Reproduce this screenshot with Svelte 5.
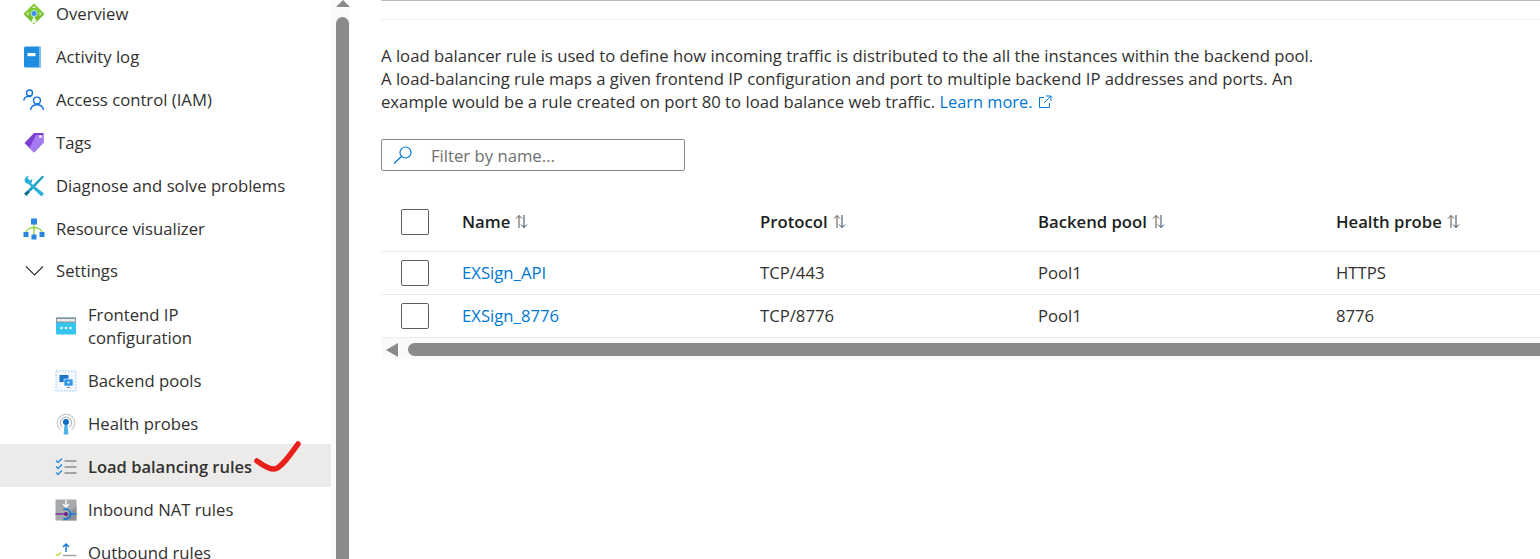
<script lang="ts">
const rows = [
  { name: 'EXSign_API', protocol: 'TCP/443', pool: 'Pool1', probe: 'HTTPS' },
  { name: 'EXSign_8776', protocol: 'TCP/8776', pool: 'Pool1', probe: '8776' },
]
const columns = ['Name', 'Protocol', 'Backend pool', 'Health probe']
</script>

{#snippet sortIcon()}
  <svg class="sort" width="13" height="15" viewBox="0 0 13 15" fill="none" stroke-width="1">
    <path d="M4 14V1.500M1 4.500l3-3 3 3" stroke="#5f5142" />
    <path d="M9 1v12.500M6 10.500l3 3 3-3" stroke="#33465a" />
  </svg>
{/snippet}

<div class="page">
  <nav class="sidebar">
    <ul class="menu">
      <li class="item">
        <span class="icon">
          <svg width="22" height="22" viewBox="0 0 22 22">
            <path d="M11 0.500 21.500 11 11 21.500 0.500 11z" fill="#76bc2d" />
            <path d="M11 .5 21.500 11H.5z" fill="#86d633" opacity=".6" />
            <path d="M11 3 9 5h4zM3.500 11l2-2v4zM18.500 11l-2-2v4z" fill="#e8f6d4" />
            <path d="M11 12v6" stroke="#fff" stroke-width="1.400" />
            <circle cx="11" cy="18" r="2.400" fill="#e8f6d4" />
            <circle cx="11" cy="10.500" r="3" fill="#3e8fe6" stroke="#dff0ff" stroke-width=".8" />
          </svg>
        </span>
        Overview
      </li>
      <li class="item">
        <span class="icon">
          <svg width="20" height="22" viewBox="0 0 20 22">
            <rect x="1" y="0.500" width="17" height="21" rx="1.500" fill="#1f8ee0" />
            <path d="M2.500 .5H17a1 1 0 0 1 1 1v19a1 1 0 0 1-1 1h-1V.5z" fill="#7fbdea" />
            <rect x="4.500" y="7" width="8" height="3.200" fill="#fff" />
          </svg>
        </span>
        Activity log
      </li>
      <li class="item">
        <span class="icon">
          <svg width="22" height="22" viewBox="0 0 22 22" fill="none" stroke="#0f6fe0" stroke-width="1.400">
            <circle cx="6.500" cy="4" r="3" />
            <path d="M.7 11.500C1.300 8.800 3.400 7.400 6 7.400c.8 0 1.600.1 2.300.4" />
            <circle cx="14" cy="11.500" r="3.400" />
            <path d="M7.500 21c.6-3.200 3.200-5.200 6.500-5.200s5.900 2 6.500 5.200" />
          </svg>
        </span>
        Access control (IAM)
      </li>
      <li class="item">
        <span class="icon">
          <svg width="22" height="22" viewBox="0 0 22 22">
            <path d="M11 1h9.500v9.500L11 20.500 1.500 11z" fill="#7b3fd0" />
            <path d="M13 3h7.500v8L11 20.500 6.500 16z" fill="#a67af0" />
            <circle cx="17.500" cy="4.500" r="1.500" fill="#efe6fb" />
          </svg>
        </span>
        Tags
      </li>
      <li class="item">
        <span class="icon">
          <svg width="22" height="22" viewBox="0 0 22 22">
            <path d="M19.500 0.500 21 2 7 17l-2-2z" fill="#1b9cc4" />
            <path d="M2 3.500a5 5 0 0 1 4-3L4.500 3l2.500 2.500L9.200 4a5 5 0 0 1-1 4.500L21 18.500 18.500 21.500 5.700 9.200A5 5 0 0 1 1.500 6z" fill="#29b1d8" />
            <path d="M5 15l2 2-3.500 4L1 18.500z" fill="#0c6d94" />
          </svg>
        </span>
        Diagnose and solve problems
      </li>
      <li class="item">
        <span class="icon">
          <svg width="22" height="22" viewBox="0 0 22 22">
            <path d="M11 5v13M3 15.500c0-3.500 3-6 8-6s8 2.500 8 6" fill="none" stroke="#8cd03a" stroke-width="1.400" />
            <rect x="8" y="0.500" width="6" height="6" fill="#2a86e2" />
            <rect x="0.500" y="14" width="5" height="5" fill="#2a86e2" />
            <rect x="16.500" y="14" width="5" height="5" fill="#2a86e2" />
            <rect x="8.500" y="16.500" width="5" height="5" fill="#2a86e2" />
          </svg>
        </span>
        Resource visualizer
      </li>
      <li class="item section">
        <span class="icon">
          <svg width="22" height="12" viewBox="0 0 22 12" fill="none" stroke="#323130" stroke-width="1.100">
            <path d="M3 1.500l8.500 8.500L20 1.500" />
          </svg>
        </span>
        Settings
      </li>
      <li class="item sub tall">
        <span class="icon">
          <svg width="22" height="18" viewBox="0 0 22 18">
            <rect x="1" y="0.500" width="20" height="17" rx="1" fill="#36c5ee" />
            <rect x="1" y="0.500" width="20" height="5" fill="#8b9399" />
            <rect x="2" y="2" width="18" height="2.500" fill="#e8eaec" />
            <circle cx="6.500" cy="11" r="1.300" fill="#e6f9ff" />
            <circle cx="11" cy="11" r="1.300" fill="#e6f9ff" />
            <circle cx="15.500" cy="11" r="1.300" fill="#e6f9ff" />
          </svg>
        </span>
        <span>Frontend IP<br />configuration</span>
      </li>
      <li class="item sub">
        <span class="icon">
          <svg width="22" height="22" viewBox="0 0 22 22">
            <rect x="1" y="1" width="20" height="20" fill="#f3f9fe" stroke="#8cc4f0" stroke-dasharray="1.500 1.500" />
            <rect x="4.500" y="5" width="9" height="7" fill="#1c74c8" />
            <rect x="9" y="9" width="9" height="7" fill="#2e95e8" stroke="#fff" stroke-width=".6" />
            <circle cx="13.500" cy="12.500" r="1.300" fill="#bfe3fb" />
            <path d="M12 17.500h3" stroke="#7a7a7a" />
          </svg>
        </span>
        Backend pools
      </li>
      <li class="item sub">
        <span class="icon">
          <svg width="22" height="22" viewBox="0 0 22 22" fill="none">
            <path d="M5.200 16.500a8.800 8.800 0 1 1 11.600 0" stroke="#c9c9c9" stroke-width="1.100" />
            <path d="M7.200 14a5.700 5.700 0 1 1 7.600 0" stroke="#aeb4b8" stroke-width="1.100" />
            <path d="M9.500 12h3l1 9.500h-5z" fill="#4fb3e8" />
            <circle cx="11" cy="9" r="3" fill="#0a6cc4" />
          </svg>
        </span>
        Health probes
      </li>
      <li class="item sub active">
        <span class="icon">
          <svg width="22" height="18" viewBox="0 0 22 18" fill="none">
            <path d="M1 2.500l2 2 4-4M1 8.500l2 2 4-4M1 14.500l2 2 4-4" stroke="#2e8ee8" stroke-width="1.500" />
            <path d="M9.500 3h12M9.500 9h12M9.500 15h12" stroke="#a3a3a3" stroke-width="2" />
          </svg>
        </span>
        Load balancing rules
      </li>
      <li class="item sub">
        <span class="icon">
          <svg width="22" height="22" viewBox="0 0 22 22" fill="none">
            <rect x="0.500" y="0.500" width="21" height="21" fill="#a7a9ac" />
            <path d="M7 21.500 21.500 7v14.500z" fill="#8f9194" />
            <path d="M11 1v6M8 5l3 3 3-3" stroke="#fff" stroke-width="1.300" />
            <path d="M.5 15h10" stroke="#8a2aa0" stroke-width="1.400" />
            <path d="M14 15h7.500" stroke="#0b78d8" stroke-width="1.400" />
            <path d="M8.500 10.500a5 5 0 1 1 0 9" stroke="#0b78d8" stroke-width="1.500" />
            <circle cx="11" cy="15" r="2" fill="#6d1f8c" />
          </svg>
        </span>
        Inbound NAT rules
      </li>
      <li class="item sub">
        <span class="icon">
          <svg width="22" height="22" viewBox="0 0 22 22" fill="none">
            <path d="M11 10V2M8 5l3-3 3 3" stroke="#0b78d8" stroke-width="1.400" />
            <path d="M8 13.500h13.500" stroke="#a3a3a3" stroke-width="1.500" />
            <path d="M1 12l1.500 1.500L6 10.500" stroke="#b5d334" stroke-width="1.200" />
          </svg>
        </span>
        Outbound rules
      </li>
    </ul>
    <svg class="tick" width="50" height="36" viewBox="0 0 50 36" fill="none">
      <path d="M4 22c5 3 10 8 17 8 6 0 14-11 24-25" stroke="#e8201c" stroke-width="5.500" stroke-linecap="round" />
    </svg>
  </nav>

  <div class="vscroll"><i class="vup"></i><div class="vthumb"></div></div>

  <main class="content">
    <div class="topbar"></div>
    <p class="intro">
      A load balancer rule is used to define how incoming traffic is distributed to the all the instances within the backend pool.<br />
      A load-balancing rule maps a given frontend IP configuration and port to multiple backend IP addresses and ports. An<br />
      example would be a rule created on port 80 to load balance web traffic.
      <a class="link" href="#learn">Learn more.
        <svg width="14" height="14" viewBox="0 0 14 14" fill="none" stroke="#0078d4" stroke-width="1">
          <path d="M6 2.500H1.500v10h10V8M8 1h5v5M13 1 6 8" />
        </svg>
      </a>
    </p>

    <div class="filter">
      <svg width="20" height="18" viewBox="0 0 20 18" fill="none" stroke="#0078d4" stroke-width="1.200">
        <circle cx="12.500" cy="6.500" r="5.500" />
        <path d="M8.500 10.500 1 17.500" />
      </svg>
      <span class="placeholder">Filter by name...</span>
    </div>

    <div class="grid head">
      <span class="check-cell"><span class="check"></span></span>
      {#each columns as col}
        <span class="th">{col} {@render sortIcon()}</span>
      {/each}
    </div>
    {#each rows as row}
      <div class="grid row">
        <span class="check-cell"><span class="check"></span></span>
        <a class="cell link" href="#rule">{row.name}</a>
        <span class="cell">{row.protocol}</span>
        <span class="cell">{row.pool}</span>
        <span class="cell">{row.probe}</span>
      </div>
    {/each}

    <div class="hscroll">
      <i class="hleft"></i>
      <div class="hthumb"></div>
    </div>
  </main>
</div>

<style>
  :global(body) {
    margin: 0;
    background: #fff;
    overflow: hidden;
  }

  .page {
    display: flex;
    width: 1540px;
    height: 559px;
    overflow: hidden;
    font-family: 'Open Sans', 'Noto Sans', sans-serif;
    font-size: 16.7px;
    line-height: 23px;
    color: #323130;
  }

  .sidebar {
    position: relative;
    width: 331px;
    flex-shrink: 0;
  }

  .menu {
    list-style: none;
    margin: -9px 0 0;
    padding: 0;
  }

  .item {
    display: flex;
    align-items: center;
    box-sizing: border-box;
    height: 43px;
    padding-top: 2px;
    padding-left: 23px;
  }

  .section {
    padding-top: 0;
  }

  .icon {
    display: flex;
    align-items: center;
    width: 33px;
    flex-shrink: 0;
  }

  .sub {
    padding-left: 55px;
  }

  .tall {
    height: 66px;
  }

  .active {
    background: #edebe9;
    font-size: 16.5px;
    font-weight: 600;
  }

  .tick {
    position: absolute;
    left: 253px;
    top: 439px;
  }

  .vscroll {
    width: 19px;
    flex-shrink: 0;
    background: #fafafa;
    padding: 0 1px 0 5px;
    box-sizing: border-box;
    position: relative;
  }

  .vup {
    display: block;
    position: absolute;
    left: 5px;
    top: 0;
    width: 0;
    height: 0;
    border-left: 7px solid transparent;
    border-right: 7px solid transparent;
    border-bottom: 7px solid #8a8a8a;
  }

  .vthumb {
    margin-top: 17px;
    height: 560px;
    background: #8a8a8a;
    border-radius: 7px 7px 0 0;
  }

  .content {
    flex: 1;
    min-width: 0;
    padding-left: 31px;
  }

  .topbar {
    height: 20px;
    border-top: 1px solid #bdbdbd;
    border-bottom: 1px solid #f0f0f0;
    box-sizing: border-box;
  }

  .intro {
    margin: 24px 0 0;
  }

  .link {
    color: #0078d4;
    text-decoration: none;
  }

  .intro .link {
    font-size: 16.4px;
  }

  .intro svg {
    margin-left: 1px;
    vertical-align: -1px;
  }

  .filter {
    display: flex;
    align-items: center;
    box-sizing: border-box;
    width: 304px;
    height: 32px;
    margin-top: 26px;
    padding-left: 11px;
    border: 1px solid #8a8886;
    border-radius: 2px;
  }

  .placeholder {
    margin-left: 18px;
    color: #707070;
  }

  .grid {
    display: grid;
    grid-template-columns: 81px 298px 278px 298px 1fr;
    align-items: center;
    border-bottom: 1px solid #ebebeb;
    height: 43px;
    box-sizing: border-box;
  }

  .head {
    height: 81px;
    padding-top: 21px;
  }

  .cell {
    margin-bottom: 2px;
  }

  .th {
    display: flex;
    align-items: center;
    gap: 5px;
    font-weight: 600;
    color: #201f1e;
  }

  .sort {
    flex-shrink: 0;
  }

  .check-cell {
    display: flex;
    padding-left: 20px;
  }

  .check {
    display: block;
    width: 28px;
    height: 26px;
    box-sizing: border-box;
    border: 1px solid #605e5c;
    border-radius: 2px;
  }

  .hscroll {
    display: flex;
    align-items: center;
    box-sizing: border-box;
    height: 21px;
    padding-top: 2px;
    background: #fafafa;
  }

  .hleft {
    display: block;
    width: 0;
    height: 0;
    margin-left: 5px;
    border-top: 7px solid transparent;
    border-bottom: 7px solid transparent;
    border-right: 12px solid #8a8a8a;
  }

  .hthumb {
    flex: 1;
    height: 13px;
    margin-left: 10px;
    background: #8a8a8a;
    border-radius: 7px 0 0 7px;
  }
</style>
